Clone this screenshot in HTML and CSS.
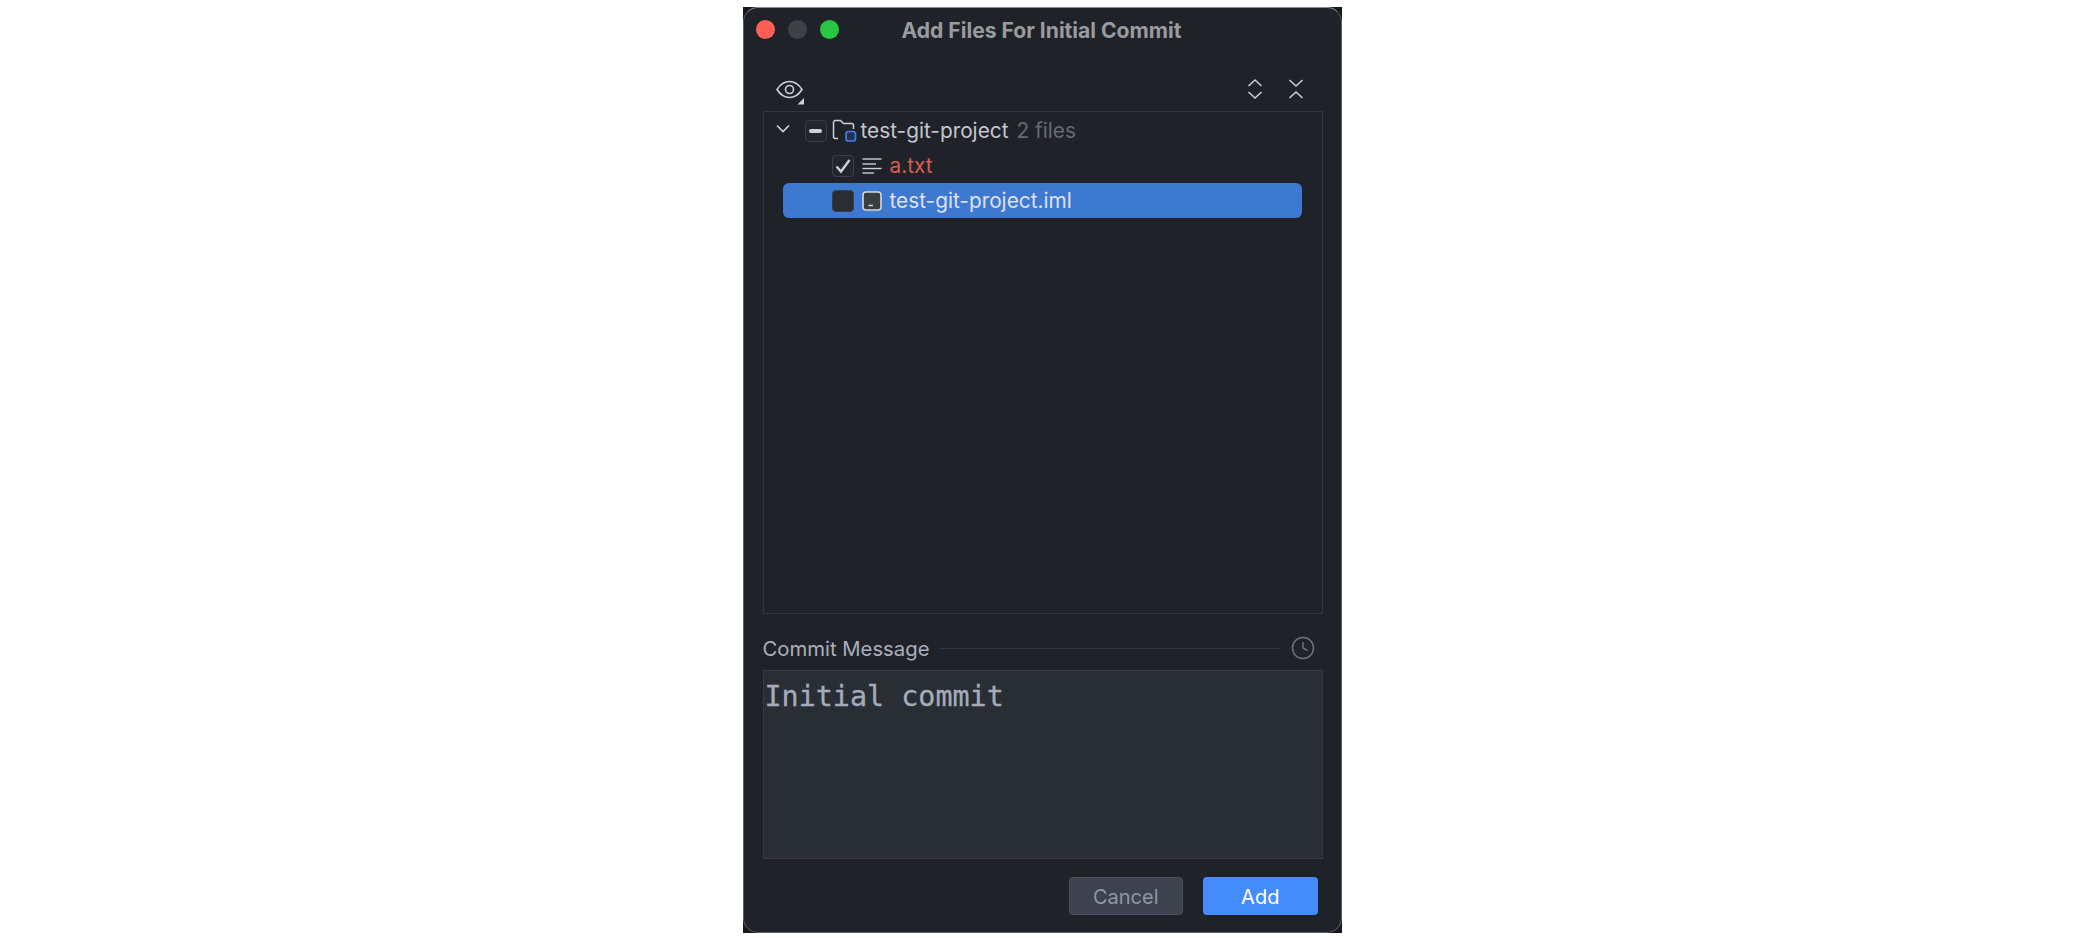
FILE: index.html
```html
<!DOCTYPE html>
<html lang="en">

<head>
    <meta charset="UTF-8">
    <title>Add Files For Initial Commit</title>
    <link rel="stylesheet" href="styles.css">
</head>

<body>
    <div class="frame">
        <div class="window">
            <div class="titlebar">
                <div class="lights">
                    <span class="light red"></span>
                    <span class="light gray"></span>
                    <span class="light green"></span>
                </div>
                <div class="title">Add Files For Initial Commit</div>
            </div>

            <div class="toolbar">
                <svg class="eye" width="30" height="28" viewBox="0 0 30 28" fill="none" stroke="#ced0d6" stroke-width="1.6">
                    <path d="M1 10.5C4.5 5 8.5 2.5 13.5 2.5S22.5 5 26 10.5C22.5 16 18.5 18.5 13.5 18.5S4.5 16 1 10.5Z" />
                    <circle cx="13.5" cy="10.5" r="4" />
                    <path d="M28 19V25.5H21.5Z" fill="#ced0d6" stroke="none" />
                </svg>
                <div class="toolbar-right">
                    <svg width="16" height="22" viewBox="0 0 16 22" fill="none" stroke="#ced0d6" stroke-width="1.5">
                        <path d="M1.5 8L8 2L14.5 8" />
                        <path d="M1.5 14L8 20L14.5 14" />
                    </svg>
                    <svg width="16" height="22" viewBox="0 0 16 22" fill="none" stroke="#ced0d6" stroke-width="1.5">
                        <path d="M1.5 2L8 8L14.5 2" />
                        <path d="M1.5 20L8 14L14.5 20" />
                    </svg>
                </div>
            </div>

            <div class="tree">
                <div class="row">
                    <svg class="chevron" width="16" height="12" viewBox="0 0 16 12" fill="none" stroke="#ced0d6" stroke-width="1.6">
                        <path d="M2 2.5L8 8.5L14 2.5" />
                    </svg>
                    <span class="check mixed"><span class="dash"></span></span>
                    <svg class="folder" width="25" height="24" viewBox="0 0 25 24" fill="none">
                        <path d="M6 19.5H3.5A2 2 0 0 1 1.5 17.5V3.5A2 2 0 0 1 3.5 1.5H8.5L11.5 4.5H19.5A2 2 0 0 1 21.5 6.5V10" stroke="#ced0d6" stroke-width="1.5" />
                        <rect x="14" y="12.5" width="9.5" height="9.5" rx="2.5" fill="#25324d" stroke="#3d7fe8" stroke-width="1.7" />
                    </svg>
                    <span class="name">test-git-project</span>
                    <span class="hint">2 files</span>
                </div>
                <div class="row">
                    <span class="check file-check">
                        <svg width="18" height="16" viewBox="0 0 18 16" fill="none" stroke="#ced0d6" stroke-width="2.4">
                            <path d="M2.5 8.5L7 13.5L15.5 2" />
                        </svg>
                    </span>
                    <svg class="file-icon" width="20" height="18" viewBox="0 0 20 18" fill="none" stroke="#ced0d6" stroke-width="1.4">
                        <path d="M0.5 2H19.5" />
                        <path d="M0.5 7H14" />
                        <path d="M0.5 11.5H19.5" />
                        <path d="M0.5 16H12" />
                    </svg>
                    <span class="name red-text">a.txt</span>
                </div>
                <div class="row selected">
                    <span class="check file-check unchecked"></span>
                    <svg class="file-icon" width="20" height="20" viewBox="0 0 20 20" fill="none">
                        <rect x="1" y="1" width="18" height="18" rx="3" fill="#3a3c40" stroke="#d5d8dd" stroke-width="1.6" />
                        <path d="M6.5 14.5H11" stroke="#d5d8dd" stroke-width="1.5" />
                    </svg>
                    <span class="name">test-git-project.iml</span>
                </div>
            </div>

            <div class="message-head">
                <span class="message-label">Commit Message</span>
                <span class="message-line"></span>
                <svg class="history" width="24" height="24" viewBox="0 0 24 24" fill="none" stroke="#6f7276" stroke-width="1.5">
                    <circle cx="12" cy="12" r="10.5" />
                    <path d="M12 6V12L16.5 14.5" />
                </svg>
            </div>

            <div class="message-box">Initial commit</div>

            <div class="buttons">
                <button type="button" class="btn cancel">Cancel</button>
                <button type="button" class="btn add">Add</button>
            </div>
        </div>
    </div>
</body>

</html>
```

FILE: styles.css
```css
html, body {
    margin: 0;
    height: 100%;
    background-color: #fff;
}

body {
    font-family: Inter, "Noto Sans", sans-serif;
    display: flex;
    justify-content: center;
    padding-top: 7px;
    padding-right: 2px;
    box-sizing: border-box;
}

.frame {
    width: 599px;
    height: 926px;
    background-color: #17181b;
}

.window {
    height: 100%;
    box-sizing: border-box;
    background-color: #1f2329;
    border: 1.5px solid #5b5e63;
    border-top-color: #8a8c90;
    border-radius: 15px;
    padding: 0 18px 0 19px;
    display: flex;
    flex-direction: column;
}

.titlebar {
    height: 44px;
    margin: 0 -18px 0 -19px;
    display: flex;
    align-items: center;
    justify-content: center;
    position: relative;
    flex-shrink: 0;
}

.lights {
    position: absolute;
    left: 12px;
    top: 12px;
    display: flex;
    gap: 13px;
}

.light {
    width: 19px;
    height: 19px;
    border-radius: 50%;
}

.red {
    background-color: #ff5f57;
}

.gray {
    background-color: #3e4145;
}

.green {
    background-color: #28c840;
}

.title {
    color: #9a9b9d;
    font-size: 21.1px;
    font-weight: 700;
    margin-right: 1px;
}

.toolbar {
    height: 59px;
    display: flex;
    align-items: center;
    justify-content: space-between;
    padding: 15px 19px 0 13px;
    box-sizing: border-box;
    flex-shrink: 0;
}

.eye {
    margin-top: 7px;
}

.toolbar-right {
    display: flex;
    gap: 25px;
}

.tree {
    height: 503px;
    box-sizing: border-box;
    border: 1.5px solid #33373d;
    padding-top: 1px;
    flex-shrink: 0;
}

.row {
    height: 35px;
    display: flex;
    align-items: center;
    margin-left: 19px;
    margin-right: 20px;
    padding-left: 49px;
    font-size: 20.8px;
    color: #c4c7cd;
    border-radius: 6px;
}

.row:first-child {
    padding-left: 0;
}

.selected {
    background-color: #3d78d1;
    color: #dde2ec;
}

.chevron {
    margin-left: -8px;
    margin-right: 14px;
    margin-top: -3px;
}

.check {
    width: 20px;
    height: 20px;
    border: 1.5px solid #3a3f47;
    border-radius: 4px;
    background-color: #22262c;
    display: flex;
    align-items: center;
    justify-content: center;
    flex-shrink: 0;
}

.mixed {
    margin-right: 5px;
}

.dash {
    width: 13px;
    height: 4px;
    border-radius: 2px;
    background-color: #ced0d6;
}

.file-check {
    margin-right: 8px;
}

.unchecked {
    background-color: #2a2d33;
}

.file-icon {
    margin-right: 8px;
    flex-shrink: 0;
}

.folder {
    margin-right: 4px;
    flex-shrink: 0;
}

.hint {
    color: #666a72;
    margin-left: 8px;
}

.red-text {
    color: #db5c50;
}

.message-head {
    height: 56px;
    display: flex;
    align-items: center;
    flex-shrink: 0;
    padding-top: 13px;
    padding-right: 8px;
    box-sizing: border-box;
}

.message-label {
    color: #a9afbb;
    font-size: 20.3px;
    margin-right: 10px;
}

.message-line {
    flex: 1;
    height: 1.5px;
    background-color: #33373d;
    margin-right: 10px;
}

.history {
    margin-top: -2px;
}

.message-box {
    height: 189px;
    box-sizing: border-box;
    flex-shrink: 0;
    background-color: #292d34;
    border: 1.5px solid #363a41;
    padding: 8px 1px;
    color: #a4acbb;
    font-family: "DejaVu Sans Mono", "Liberation Mono", monospace;
    font-size: 28.4px;
    line-height: 36px;
    -webkit-text-stroke: 0.3px #a4acbb;
}

.buttons {
    display: flex;
    justify-content: flex-end;
    gap: 20px;
    padding-top: 18px;
    padding-right: 5px;
}

.btn {
    width: 114.5px;
    height: 38px;
    padding: 1px 0 0;
    border-radius: 4px;
    font-family: inherit;
    font-size: 20px;
}

.cancel {
    background-color: #3d434e;
    border: 1px solid #4a4f59;
    color: #8f97a6;
}

.add {
    background-color: #448cfb;
    border: none;
    color: #fff;
}
```
